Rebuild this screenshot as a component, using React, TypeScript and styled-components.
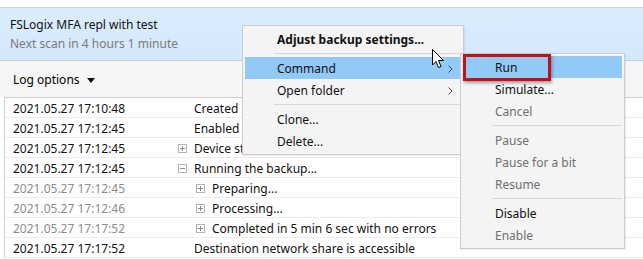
import React from 'react'
import styled, { createGlobalStyle } from 'styled-components'

const GlobalStyle = createGlobalStyle`
  html, body {
    margin: 0;
    padding: 0;
    background: #ffffff;
  }
  body {
    font-family: 'Noto Sans', 'Segoe UI', sans-serif;
    font-size: 12px;
    color: #000;
  }
`

const Page = styled.div`
  position: relative;
  width: 643px;
  height: 259px;
  overflow: hidden;
  background: #fff;
`

const TopStrip = styled.div`
  height: 7px;
  border-bottom: 1px solid #cfd3d8;
`

const Header = styled.div`
  height: 52px;
  padding: 0 10px;
  display: flex;
  flex-direction: column;
  justify-content: center;
  gap: 2px;
  background: linear-gradient(to bottom, #dbedfd, #d4e8fb);
  border-bottom: 1px solid #c9ccd0;
`

const Title = styled.div`
  line-height: 17px;
  color: #111;
`

const Subtitle = styled.div`
  line-height: 17px;
  color: #7a7a7a;
`

const Toolbar = styled.div`
  height: 36px;
  padding: 1px 13px 0;
  box-sizing: border-box;
  display: flex;
  align-items: center;
  gap: 7px;
  background: #f6f6f6;
`

const Caret = styled.span`
  width: 0;
  height: 0;
  border-left: 4px solid transparent;
  border-right: 4px solid transparent;
  border-top: 5px solid #111;
  margin-top: 1px;
`

const Table = styled.div`
  margin-left: 4px;
  border-top: 1px solid #cfcfcf;
  border-left: 1px solid #cfcfcf;
  background: #fff;
`

const Row = styled.div<{ $dim?: boolean }>`
  height: 20px;
  padding-top: 1px;
  display: grid;
  grid-template-columns: 173px 1fr;
  align-items: center;
  border-bottom: 1px solid #ececec;
  box-sizing: border-box;
  color: ${({ $dim }) => ($dim ? '#8c8c8c' : '#111')};
  white-space: nowrap;
`

const Stamp = styled.span`
  padding-left: 8px;
`

const Message = styled.span<{ $depth: number }>`
  display: flex;
  align-items: center;
  gap: 7px;
  padding-left: ${({ $depth }) => ($depth === 2 ? 18 : 0)}px;
  margin-left: ${({ $depth }) => ($depth === 0 ? 16 : 0)}px;
  color: #111;
`

const ExpandBox = styled.span`
  width: 7px;
  height: 7px;
  border: 1px solid #b4b4b4;
  position: relative;
  flex: none;
  &:before {
    content: '';
    position: absolute;
    left: 1px;
    right: 1px;
    top: 3px;
    height: 1px;
    background: #8a8a8a;
  }
`

const PlusBox = styled(ExpandBox)`
  &:after {
    content: '';
    position: absolute;
    top: 1px;
    bottom: 1px;
    left: 3px;
    width: 1px;
    background: #8a8a8a;
  }
`

const Menu = styled.div<{ $left: number; $top: number; $width: number }>`
  position: absolute;
  left: ${({ $left }) => $left}px;
  top: ${({ $top }) => $top}px;
  width: ${({ $width }) => $width}px;
  box-sizing: border-box;
  padding: 2px;
  background: #f4f4f4;
  border: 1px solid #cccccc;
  box-shadow: 1px 1px 1px rgba(0, 0, 0, 0.06);
`

const Item = styled.div<{ $active?: boolean; $disabled?: boolean; $bold?: boolean }>`
  position: relative;
  height: 22px;
  display: flex;
  align-items: center;
  padding-left: 32px;
  background: ${({ $active }) => ($active ? '#91c9f7' : 'transparent')};
  color: ${({ $disabled }) => ($disabled ? '#6f6f6f' : '#111')};
  font-weight: ${({ $bold }) => ($bold ? 700 : 400)};
  white-space: nowrap;
`

const Arrow = styled.svg`
  position: absolute;
  right: 8px;
  top: 8px;
`

const Separator = styled.div`
  height: 1px;
  margin: 3px 0 3px 29px;
  background: #d7d7d7;
`

const Highlight = styled.div`
  position: absolute;
  left: 2px;
  top: 0;
  width: 82px;
  height: 21px;
  border: 3px solid #c0111b;
  box-shadow: 1px 2px 3px rgba(0, 0, 0, 0.35);
  pointer-events: none;
`

const Cursor = styled.svg`
  position: absolute;
  left: 432px;
  top: 49px;
`

const Chevron = () => (
  <Arrow width="5" height="8" viewBox="0 0 5 8">
    <path d="M0.5 0.5 L4 4 L0.5 7.5" fill="none" stroke="#444" strokeWidth="1" />
  </Arrow>
)

type LogRow = { time: string; text: string; depth: number; box?: 'plus' | 'minus'; dim?: boolean }

const rows: LogRow[] = [
  { time: '2021.05.27 17:10:48', text: 'Created', depth: 0 },
  { time: '2021.05.27 17:12:45', text: 'Enabled', depth: 0 },
  { time: '2021.05.27 17:12:45', text: 'Device st', depth: 1, box: 'plus' },
  { time: '2021.05.27 17:12:45', text: 'Running the backup...', depth: 1, box: 'minus' },
  { time: '2021.05.27 17:12:45', text: 'Preparing...', depth: 2, box: 'plus', dim: true },
  { time: '2021.05.27 17:12:46', text: 'Processing...', depth: 2, box: 'plus', dim: true },
  { time: '2021.05.27 17:17:52', text: 'Completed in 5 min 6 sec with no errors', depth: 2, box: 'plus', dim: true },
  { time: '2021.05.27 17:17:52', text: 'Destination network share is accessible', depth: 0 },
]

const App: React.FC = () => (
  <Page>
    <GlobalStyle />
    <TopStrip />
    <Header>
      <Title>FSLogix MFA repl with test</Title>
      <Subtitle>Next scan in 4 hours 1 minute</Subtitle>
    </Header>
    <Toolbar>
      Log options
      <Caret />
    </Toolbar>
    <Table>
      {rows.map((r, i) => (
        <Row key={i} $dim={r.dim}>
          <Stamp>{r.time}</Stamp>
          <Message $depth={r.depth}>
            {r.box === 'plus' && <PlusBox />}
            {r.box === 'minus' && <ExpandBox />}
            {r.text}
          </Message>
        </Row>
      ))}
    </Table>

    <Menu $left={242} $top={25} $width={222}>
      <Item $bold>Adjust backup settings...</Item>
      <Separator />
      <Item $active>
        Command
        <Chevron />
      </Item>
      <Item>
        Open folder
        <Chevron />
      </Item>
      <Separator />
      <Item>Clone...</Item>
      <Item>Delete...</Item>
    </Menu>

    <Menu $left={460} $top={53} $width={165}>
      <Item $active>Run</Item>
      <Item>Simulate...</Item>
      <Item $disabled>Cancel</Item>
      <Separator />
      <Item $disabled>Pause</Item>
      <Item $disabled>Pause for a bit</Item>
      <Item $disabled>Resume</Item>
      <Separator />
      <Item>Disable</Item>
      <Item $disabled>Enable</Item>
      <Highlight />
    </Menu>

    <Cursor width="13" height="20" viewBox="0 0 13 20">
      <path
        d="M0.5 0.5 L0.5 16 L4 12.5 L6.5 18.5 L9 17.5 L6.5 11.5 L11.5 11.5 Z"
        fill="#fff"
        stroke="#000"
        strokeWidth="1"
        strokeLinejoin="miter"
      />
    </Cursor>
  </Page>
)

export default App
